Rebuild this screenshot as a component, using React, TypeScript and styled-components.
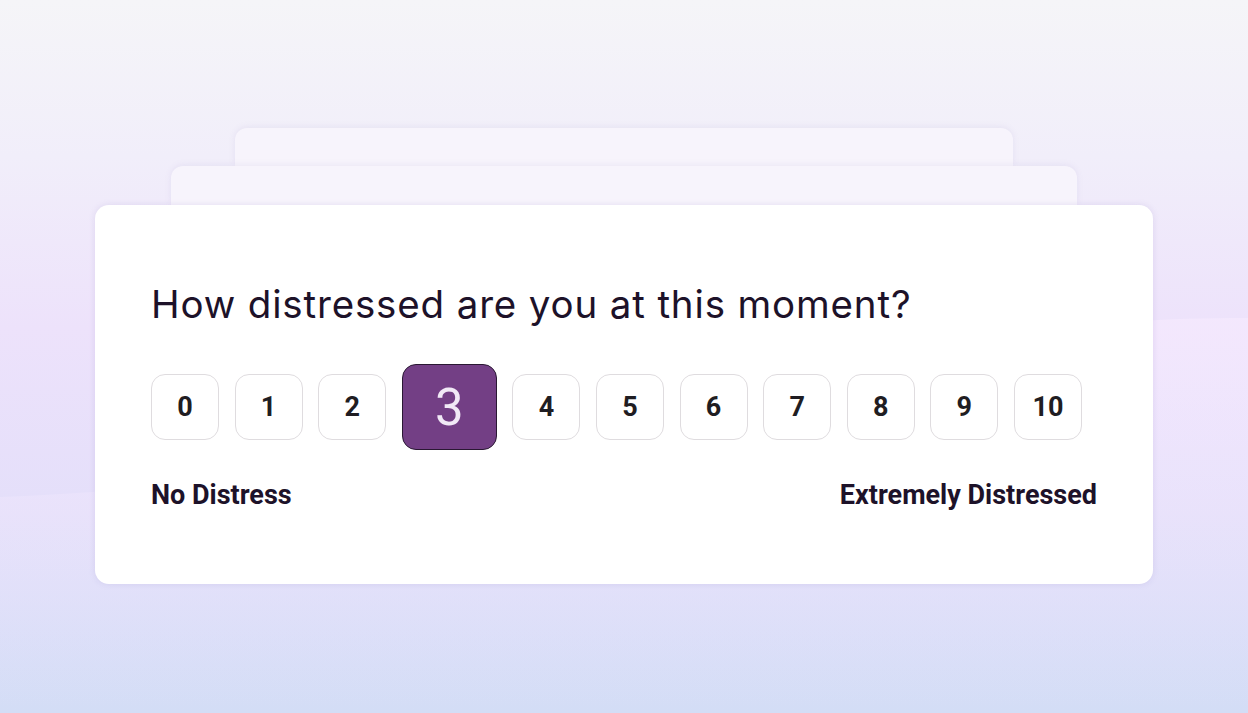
import React, { useState } from 'react';
import styled, { createGlobalStyle } from 'styled-components';

const GlobalStyle = createGlobalStyle`
  html, body {
    margin: 0;
    padding: 0;
  }
  body {
    font-family: Inter, "Noto Sans", sans-serif;
  }
`;

const Page = styled.div`
  position: relative;
  width: 1248px;
  height: 713px;
  overflow: hidden;
  background: linear-gradient(180deg, #f5f5f8 0%, #f1eefa 22%, #ede2fb 46%, #e4dffa 72%, #d3ddf6 100%);
`;

// faint decorative wave sitting behind the cards
const Wave = styled.svg`
  position: absolute;
  left: 0;
  top: 0;
  width: 1248px;
  height: 713px;
  pointer-events: none;
`;

const Stage = styled.div`
  position: relative;
  display: flex;
  flex-direction: column;
  align-items: center;
  padding-top: 128px;
`;

const BackCard = styled.div<{ $width: number; $height: number }>`
  width: ${p => p.$width}px;
  height: ${p => p.$height}px;
  background: #f7f4fc;
  border-radius: 12px 12px 0 0;
  box-shadow: 0 -1px 6px rgba(150, 130, 190, 0.12);
`;

const Card = styled.div`
  width: 1058px;
  height: 379px;
  box-sizing: border-box;
  background: #ffffff;
  border-radius: 14px;
  box-shadow: 0 0 6px rgba(140, 120, 190, 0.18);
  padding: 75px 56px 0;
  display: flex;
  flex-direction: column;
`;

const Question = styled.h1`
  margin: 0;
  font-family: Inter, "Noto Sans", sans-serif;
  font-weight: 400;
  font-size: 38.5px;
  line-height: 48px;
  color: #1d1229;
  letter-spacing: 0.85px;
`;

const Scale = styled.div`
  display: flex;
  align-items: center;
  gap: 15.6px;
  margin-top: 36px;
  height: 86px;
`;

const ScoreButton = styled.button<{ $selected: boolean }>`
  box-sizing: border-box;
  width: ${p => (p.$selected ? 95 : 68)}px;
  height: ${p => (p.$selected ? 86 : 66)}px;
  border-radius: 14px;
  border: 1px solid ${p => (p.$selected ? '#2a1833' : '#dfdcdf')};
  background: ${p => (p.$selected ? '#733f85' : '#ffffff')};
  color: ${p => (p.$selected ? '#f1e9f6' : '#1f1d22')};
  font-family: Roboto, "Liberation Sans", sans-serif;
  font-weight: ${p => (p.$selected ? 400 : 700)};
  font-size: ${p => (p.$selected ? 51 : 27)}px;
  display: flex;
  align-items: center;
  justify-content: center;
  padding: 0;
  cursor: pointer;
`;

const Legend = styled.div`
  display: flex;
  justify-content: space-between;
  margin-top: 29px;
  width: 946px;
`;

const LegendText = styled.span`
  font-family: Roboto, "Liberation Sans", sans-serif;
  font-weight: 700;
  font-size: 27px;
  line-height: 32px;
  color: #1d1229;
`;

const scores = [0, 1, 2, 3, 4, 5, 6, 7, 8, 9, 10];

export default function App() {
  const [value, setValue] = useState(3);

  return (
    <Page>
      <GlobalStyle />
      <Wave viewBox="0 0 1248 713">
        <defs>
          <linearGradient id="waveFade" x1="0" y1="0" x2="0" y2="1">
            <stop offset="0" stopColor="#f8ecff" stopOpacity="0.55" />
            <stop offset="0.55" stopColor="#f4eaff" stopOpacity="0.25" />
            <stop offset="1" stopColor="#f4eaff" stopOpacity="0" />
          </linearGradient>
        </defs>
        <path
          d="M0 497 C 300 485, 700 420, 1000 340 C 1080 322, 1160 318, 1248 318 L 1248 713 L 0 713 Z"
          fill="url(#waveFade)"
        />
      </Wave>
      <Stage>
        <BackCard $width={778} $height={38} />
        <BackCard $width={906} $height={39} />
        <Card>
          <Question>How distressed are you at this moment?</Question>
          <Scale>
            {scores.map(s => (
              <ScoreButton key={s} $selected={s === value} onClick={() => setValue(s)}>
                {s}
              </ScoreButton>
            ))}
          </Scale>
          <Legend>
            <LegendText>No Distress</LegendText>
            <LegendText>Extremely Distressed</LegendText>
          </Legend>
        </Card>
      </Stage>
    </Page>
  );
}
